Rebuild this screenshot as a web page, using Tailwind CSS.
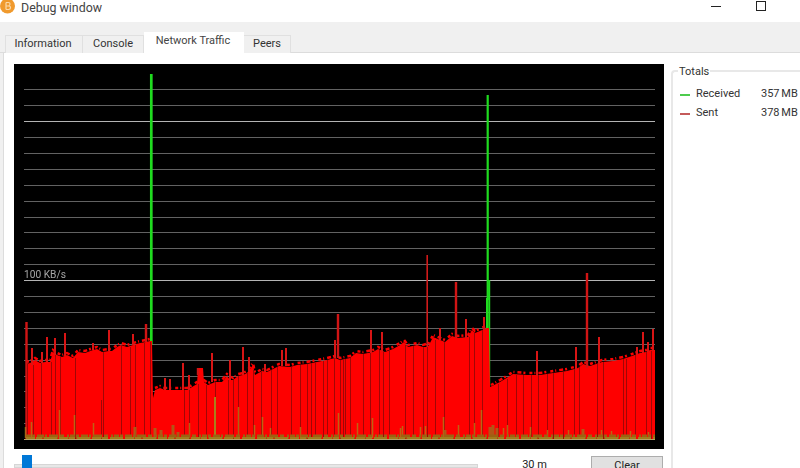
<!DOCTYPE html>
<html>
<head>
<meta charset="utf-8">
<script src="https://cdn.jsdelivr.net/npm/@tailwindcss/browser@4"></script>
</head>
<body class="w-[800px] h-[468px] overflow-hidden bg-[#f0f0f0] font-['Roboto','Noto_Sans',sans-serif] text-[11px] text-[#333]">
  <!-- title bar -->
  <div class="h-[22px] bg-white flex items-start">
    <svg class="mt-[-2px] w-[16px] h-[16px] shrink-0" viewBox="0 0 16 16">
      <circle cx="7.5" cy="8" r="7.5" fill="#f09a2e"/>
      <path d="M6 4.5V11.5M6 4.5H8.5Q10 4.5 10 6T8.5 8H6M8.5 8Q10.5 8 10.5 9.7T8.5 11.5H6" stroke="#fbd9a8" stroke-width="1.2" fill="none"/>
    </svg>
    <span class="ml-[5px] text-[12.4px] leading-[15px] text-[#444]">Debug window</span>
    <div class="ml-auto flex items-start">
      <div class="mt-[6px] w-[10px] h-px bg-[#222]"></div>
      <div class="ml-[35px] mr-[34px] mt-px w-[10px] h-[10px] border border-[#222]"></div>
    </div>
  </div>
  <!-- tabs -->
  <div class="h-[31px] flex items-end pl-[5px] relative">
    <div class="absolute left-0 right-0 bottom-0 h-px bg-[#dcdcdc]"></div>
    <div class="w-[78px] h-[18px] pr-[2px] flex items-center justify-center bg-[#f0f0f0] border border-b-0 border-[#e0e0e0] relative">Information</div>
    <div class="w-[61px] h-[18px] flex items-center justify-center bg-[#f0f0f0] border border-l-0 border-b-0 border-[#e0e0e0] relative">Console</div>
    <div class="w-[100px] h-[21px] pb-[3px] pr-[2px] flex items-center justify-center bg-white relative z-10 text-[#444]">Network Traffic</div>
    <div class="w-[47px] h-[18px] flex items-center justify-center bg-[#f0f0f0] border border-l-0 border-b-0 border-[#e0e0e0] relative">Peers</div>
  </div>
  <!-- pane -->
  <div class="ml-[3px] h-[415px] bg-white border-l border-[#dcdcdc] flex pl-[10px] pt-[11px]">
    <div class="w-[650px] shrink-0">
      <svg class="block w-[650px] h-[385px] blur-[0.3px]" viewBox="14 64 650 385">
        <rect x="14" y="64" width="650" height="385" fill="#000"/>
        <path d="M24 89.5H655M24 105.5H655M24 137.5H655M24 153.5H655M24 169.5H655M24 185.5H655M24 201.5H655M24 217.5H655M24 232.5H655M24 248.5H655M24 264.5H655M24 296.5H655M24 312.5H655M24 328.5H655M24 344.5H655M24 360.5H655M24 376.5H655M24 391.5H655M24 407.5H655M24 423.5H655" stroke="#626262" stroke-width="1.2" fill="none"/>
        <path d="M24 121.5H655M24 280.5H655" stroke="#b4b4b4" stroke-width="1.2" fill="none"/>
        <text x="24" y="278" font-size="10.2" fill="#a6a6a6">100 KB/s</text>
        <!-- green spikes -->
        <path d="M151.3 74V345" stroke="#1fdb1f" stroke-width="2.7" fill="none"/>
        <path d="M487.7 95V300" stroke="#1fdb1f" stroke-width="2.2" fill="none"/>
        <path d="M489.2 280V386" stroke="#1fdb1f" stroke-width="2" fill="none"/>
        <path d="M487 298V330" stroke="#1fdb1f" stroke-width="2" fill="none"/>
        <!-- received/sent body -->
        <polygon fill="#fe0000" points="26,364 30,363 35,360 40,363 45,362 50,362 53,352 57,355 62,357 67,355 73,358 78,352 85,353 93,350 97,349 102,352 109,351 112,351 117,347 121,345 127,347 133,345 140,343 146,342 150,341 152,341 153,398 155,390 160,388 165,390 173,390 180,390 187,390 192,387 197,384 198,368 203,368 204,382 208,385 215,382 222,382 227,376 230,380 233,380 238,376 243,375 247,373 253,365 255,375 262,371 267,372 275,368 279,366 290,367 297,365 307,364 317,362 327,360 335,358 340,360 350,358 356,353 363,354 373,352 378,349 385,352 393,349 400,345 404,342 408,347 417,345 423,347 427,347 429,345 433,337 445,342 452,336 458,338 468,337 472,330 475,333 487,328 489,328 490,387 500,382 513,374 527,375 540,375 553,373 567,371 578,368 583,364 590,366 602,362 613,361 623,359 632,356 640,353 646,352 650,350 655,350 655,439 26,439"/>
        <!-- jagged edge of the bars -->
        <polyline fill="none" stroke="#fe0000" stroke-width="2.5" stroke-dasharray="3 2 1 3 4 2 2 4" points="26,362 30,361 35,358 40,361 45,360 50,360 53,350 57,353 62,355 67,353 73,356 78,350 85,351 93,348 97,347 102,350 109,349 112,349 117,345 121,343 127,345 133,343 140,341 146,340 150,339"/>
        <polyline fill="none" stroke="#fe0000" stroke-width="2.5" stroke-dasharray="3 2 1 3 4 2 2 4" points="155,388 160,386 165,388 173,388 180,388 187,388 192,385 197,382 204,380 208,383 215,380 222,380 227,374 233,378 238,374 243,373 247,371 253,363 255,373 262,369 267,370 275,366 279,364 290,365 297,363 307,362 317,360 327,358 335,356 340,358 350,356 356,351 363,352 373,350 378,347 385,350 393,347 400,343 404,340 408,345 417,343 423,345 429,343 433,335 445,340 452,334 458,336 468,335 472,328 475,331 486,326"/>
        <polyline fill="none" stroke="#fe0000" stroke-width="2.5" stroke-dasharray="3 2 1 3 4 2 2 4" points="491,385 500,380 513,372 527,373 540,373 553,371 567,369 578,366 583,362 590,364 602,360 613,359 623,357 632,354 640,351 646,350 650,348 655,348"/>
        <!-- sent spikes -->
        <path d="M26.5 322V439M146 324V342M338 314V358M456 282V338M587 273V368M198 368V375" stroke="#d01414" stroke-width="2.4" fill="none"/>
        <path d="M32 348V365M42 352V363M47 337V362M55 338V355M65 333V356M93 343V350M109 330V351M133 334V345M165 378V390M170 379V390M183 363V390M189 375V390M212 353V382M230 360V380M243 347V375M249 357V372M265 364V372M282 350V366M286 348V366M335 340V358M371 330V353M382 332V352M440 328V340M466 319V338M484 317V330M537 351V376M576 347V370M599 337V364M637 347V355M643 332V353M648 342V352M653 329V351" stroke="#d81515" stroke-width="2" fill="none"/>
        <path d="M427.2 255V347" stroke="#d01a1a" stroke-width="1.6" fill="none"/>
        <!-- dark gaps in the bars -->
        <path d="M27.5 364V439M33.5 365V439M41.5 363V439M51.5 362V439M55.5 355V439M60.5 357V439M75.5 358V439M101.5 400V439M103.5 352V439M121.5 345V439M130.5 347V439M135.5 345V439M144.5 343V439M150.5 342V439M184.5 390V439M189.5 390V439M198.5 384V439M206.5 385V439M215.5 382V439M228.5 380V439M233.5 380V439M238.5 376V439M247.5 373V439M253.5 370V439M261.5 372V439M271.5 370V439M277.5 367V439M291.5 367V439M300.5 365V439M307.5 364V439M311.5 363V439M315.5 362V439M323.5 361V439M327.5 360V439M334.5 358V439M340.5 360V439M343.5 359V439M345.5 359V439M350.5 358V439M363.5 354V439M370.5 353V439M379.5 350V439M383.5 352V439M389.5 351V439M405.5 345V439M413.5 346V439M423.5 347V439M427.5 347V439M435.5 340V439M444.5 342V439M469.5 337V439M474.5 333V439M482.5 330V439M498.5 384V439M507.5 379V439M516.5 375V439M523.5 375V439M531.5 375V439M538.5 375V439M547.5 374V439M553.5 373V439M563.5 372V439M574.5 369V439M579.5 367V439M597.5 364V439M603.5 362V439M623.5 359V439M626.5 359V439M635.5 355V439M646.5 352V439M651.5 351V439" stroke="#a00606" stroke-width="1" fill="none"/>
        <!-- olive spikes -->
        <path d="M25.5 427V438M31.5 422V438M59.5 410V438M74.5 415V438M93.5 423V438M189.5 423V438M238.5 407V438M254.5 425V438M262.5 417V438M270.5 428V438M300.5 427V438M338.5 413V438M357.5 423V438M372.5 418V438M400.5 428V438M402.5 426V438M420.5 427V438M425.5 426V438M443.5 417V438M458.5 425V438M474.5 423V438M481.5 410V438M503.5 428V438M507.5 425V438M530.5 427V438M547.5 430V438M568.5 430V438M601.5 430V438M611.5 431V438M630.5 431V438M648.5 432V438" stroke="#ae7c18" stroke-width="1.5" stroke-opacity="0.8" fill="none"/>
        <path d="M215 397V438" stroke="#a8801c" stroke-width="2" fill="none"/>
        <path d="M135 427V438M155 428V438M161 430V438M173 425V438M178 432V438M445 430V438M490 427V438M493 425V438M497 428V438M583 429V438" stroke="#a5651a" stroke-width="3" stroke-opacity="0.85" fill="none"/>
        <!-- noise band at the floor -->
        <path d="M26 436.5H655" stroke="#9c6212" stroke-width="4" stroke-dasharray="5 1 3 2 7 1 2 2 9 2 4 3 2 1" fill="none"/>
        <path d="M26 438H655" stroke="#a27c1c" stroke-width="2" stroke-dasharray="9 1 6 2 13 2" fill="none"/>
        <path d="M24 439.5H655" stroke="#b4a268" stroke-width="1" fill="none"/>
      </svg>
      <!-- slider row -->
      <div class="mt-[6px] flex items-start">
        <div class="w-[464px] h-[13px] relative">
          <div class="absolute left-0 right-0 top-[9px] h-[4px] bg-[#e7e7e7] border border-[#d6d6d6]"></div>
          <div class="absolute left-[8px] top-0 w-[10px] h-[13px] bg-[#0078d7]"></div>
        </div>
        <div class="w-[113px] text-center leading-[14px] mt-[3px] text-[#222]">30 m</div>
        <div class="w-[72px] h-[24px] bg-[#e1e1e1] border border-[#adadad] text-center leading-[18px] mt-px text-[#222]">Clear</div>
      </div>
    </div>
    <!-- totals -->
    <div class="ml-[7px] mt-[6px] flex-1 relative h-[400px] border-2 border-r-0 border-b-0 border-[#e8e8e8] rounded-tl-sm">
      <span class="absolute left-[5px] top-[-8px] bg-white px-px leading-[15px]">Totals</span>
      <div class="mt-[13px] pl-[7px] flex items-center h-[19px]">
        <div class="w-[10px] h-[2px] bg-[#4ecb4e]"></div>
        <span class="ml-[6px] w-[65px]">Received</span>
        <span class="whitespace-nowrap [word-spacing:-1px]">357 MB</span>
      </div>
      <div class="pl-[7px] flex items-center h-[19px]">
        <div class="w-[10px] h-[2px] bg-[#c45a5a]"></div>
        <span class="ml-[6px] w-[65px]">Sent</span>
        <span class="whitespace-nowrap [word-spacing:-1px]">378 MB</span>
      </div>
    </div>
  </div>
</body>
</html>
